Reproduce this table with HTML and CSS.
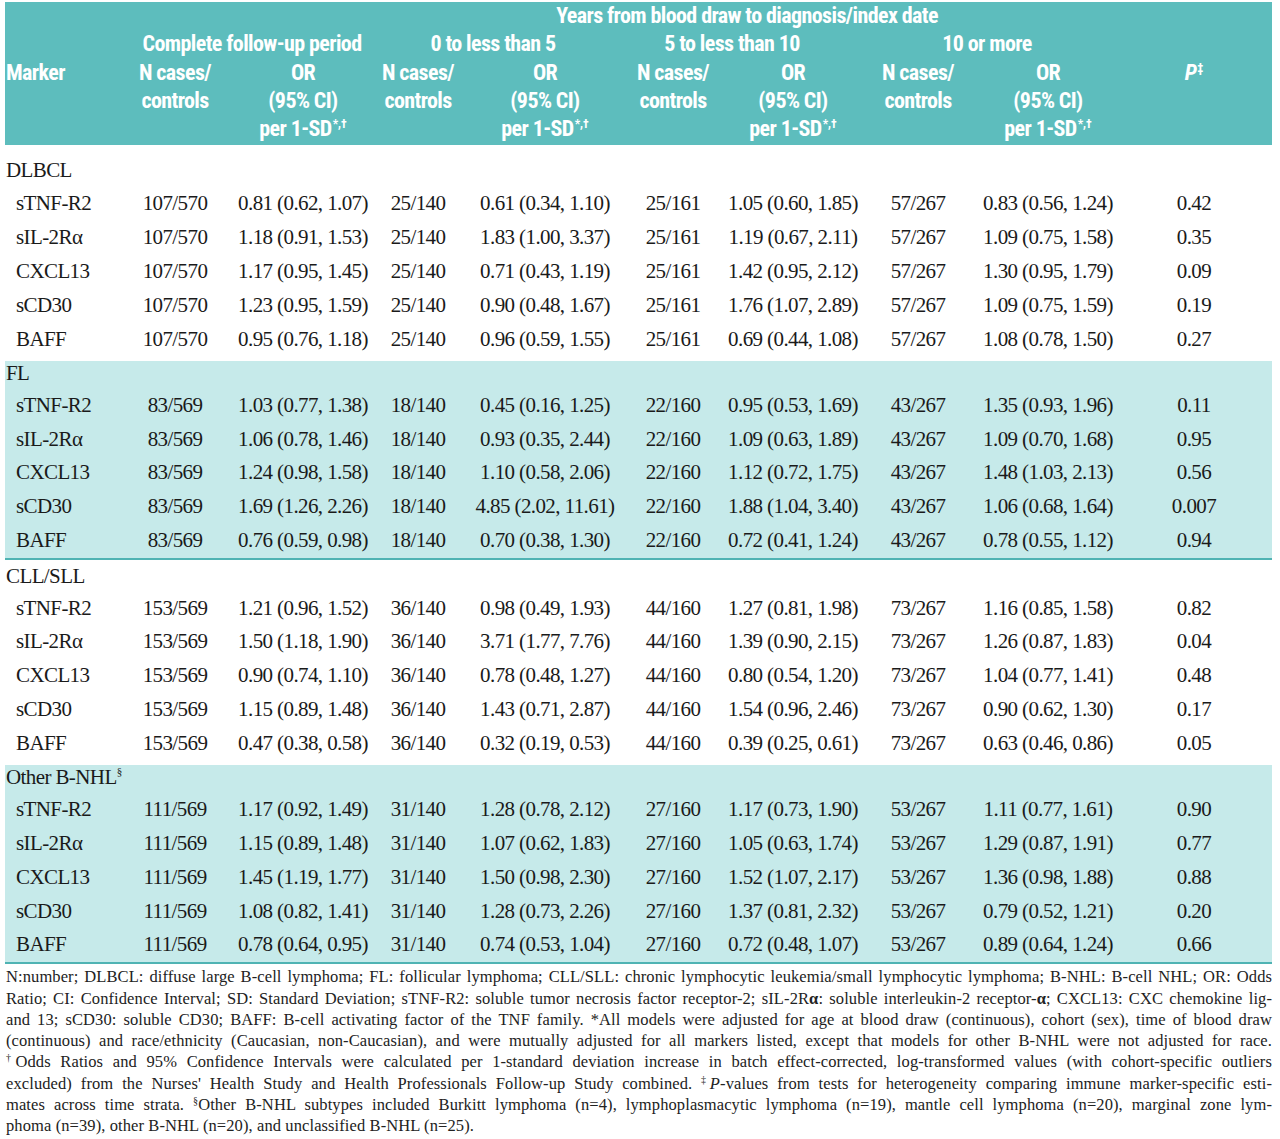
FILE: index.html
```html
<!DOCTYPE html>
<html lang="en">
<head>
<meta charset="utf-8">
<title>Immune markers and B-NHL risk by time from blood draw</title>
<link rel="stylesheet" href="styles.css">
</head>
<body>
<div class="page">
<table class="tbl">
  <colgroup>
    <col class="c-marker"><col class="c-n1"><col class="c-or1"><col class="c-n2"><col class="c-or2"><col class="c-n3"><col class="c-or3"><col class="c-n4"><col class="c-or4"><col class="c-p">
  </colgroup>
  <thead>
    <tr>
      <th colspan="3"></th>
      <th colspan="6" class="g-years">Years from blood draw to diagnosis/index date</th>
      <th></th>
    </tr>
    <tr>
      <th></th>
      <th colspan="2" class="g-all">Complete follow-up period</th>
      <th colspan="2" class="g-0">0 to less than 5</th>
      <th colspan="2" class="g-5">5 to less than 10</th>
      <th colspan="2" class="g-10">10 or more</th>
      <th></th>
    </tr>
    <tr>
      <th class="h-marker">Marker</th>
      <th>N cases/</th><th>OR</th>
      <th>N cases/</th><th>OR</th>
      <th>N cases/</th><th>OR</th>
      <th>N cases/</th><th>OR</th>
      <th class="h-p"><i>P</i><sup>‡</sup></th>
    </tr>
    <tr>
      <th></th>
      <th>controls</th><th>(95% CI)</th>
      <th>controls</th><th>(95% CI)</th>
      <th>controls</th><th>(95% CI)</th>
      <th>controls</th><th>(95% CI)</th>
      <th></th>
    </tr>
    <tr class="h-last">
      <th></th>
      <th></th><th>per 1-SD<sup>*,†</sup></th>
      <th></th><th>per 1-SD<sup>*,†</sup></th>
      <th></th><th>per 1-SD<sup>*,†</sup></th>
      <th></th><th>per 1-SD<sup>*,†</sup></th>
      <th></th>
    </tr>
  </thead>

  <tbody class="sec sec-first">
    <tr class="lab"><td colspan="10">DLBCL</td></tr>
    <tr><td class="mk">sTNF-R2</td><td>107/570</td><td>0.81 (0.62, 1.07)</td><td>25/140</td><td>0.61 (0.34, 1.10)</td><td>25/161</td><td>1.05 (0.60, 1.85)</td><td>57/267</td><td>0.83 (0.56, 1.24)</td><td class="p">0.42</td></tr>
    <tr><td class="mk">sIL-2Rα</td><td>107/570</td><td>1.18 (0.91, 1.53)</td><td>25/140</td><td>1.83 (1.00, 3.37)</td><td>25/161</td><td>1.19 (0.67, 2.11)</td><td>57/267</td><td>1.09 (0.75, 1.58)</td><td class="p">0.35</td></tr>
    <tr><td class="mk">CXCL13</td><td>107/570</td><td>1.17 (0.95, 1.45)</td><td>25/140</td><td>0.71 (0.43, 1.19)</td><td>25/161</td><td>1.42 (0.95, 2.12)</td><td>57/267</td><td>1.30 (0.95, 1.79)</td><td class="p">0.09</td></tr>
    <tr><td class="mk">sCD30</td><td>107/570</td><td>1.23 (0.95, 1.59)</td><td>25/140</td><td>0.90 (0.48, 1.67)</td><td>25/161</td><td>1.76 (1.07, 2.89)</td><td>57/267</td><td>1.09 (0.75, 1.59)</td><td class="p">0.19</td></tr>
    <tr class="end"><td class="mk">BAFF</td><td>107/570</td><td>0.95 (0.76, 1.18)</td><td>25/140</td><td>0.96 (0.59, 1.55)</td><td>25/161</td><td>0.69 (0.44, 1.08)</td><td>57/267</td><td>1.08 (0.78, 1.50)</td><td class="p">0.27</td></tr>
  </tbody>

  <tbody class="sec shade">
    <tr class="lab"><td colspan="10">FL</td></tr>
    <tr><td class="mk">sTNF-R2</td><td>83/569</td><td>1.03 (0.77, 1.38)</td><td>18/140</td><td>0.45 (0.16, 1.25)</td><td>22/160</td><td>0.95 (0.53, 1.69)</td><td>43/267</td><td>1.35 (0.93, 1.96)</td><td class="p">0.11</td></tr>
    <tr><td class="mk">sIL-2Rα</td><td>83/569</td><td>1.06 (0.78, 1.46)</td><td>18/140</td><td>0.93 (0.35, 2.44)</td><td>22/160</td><td>1.09 (0.63, 1.89)</td><td>43/267</td><td>1.09 (0.70, 1.68)</td><td class="p">0.95</td></tr>
    <tr><td class="mk">CXCL13</td><td>83/569</td><td>1.24 (0.98, 1.58)</td><td>18/140</td><td>1.10 (0.58, 2.06)</td><td>22/160</td><td>1.12 (0.72, 1.75)</td><td>43/267</td><td>1.48 (1.03, 2.13)</td><td class="p">0.56</td></tr>
    <tr><td class="mk">sCD30</td><td>83/569</td><td>1.69 (1.26, 2.26)</td><td>18/140</td><td>4.85 (2.02, 11.61)</td><td>22/160</td><td>1.88 (1.04, 3.40)</td><td>43/267</td><td>1.06 (0.68, 1.64)</td><td class="p">0.007</td></tr>
    <tr><td class="mk">BAFF</td><td>83/569</td><td>0.76 (0.59, 0.98)</td><td>18/140</td><td>0.70 (0.38, 1.30)</td><td>22/160</td><td>0.72 (0.41, 1.24)</td><td>43/267</td><td>0.78 (0.55, 1.12)</td><td class="p">0.94</td></tr>
  </tbody>

  <tbody class="sec plain">
    <tr class="lab"><td colspan="10">CLL/SLL</td></tr>
    <tr><td class="mk">sTNF-R2</td><td>153/569</td><td>1.21 (0.96, 1.52)</td><td>36/140</td><td>0.98 (0.49, 1.93)</td><td>44/160</td><td>1.27 (0.81, 1.98)</td><td>73/267</td><td>1.16 (0.85, 1.58)</td><td class="p">0.82</td></tr>
    <tr><td class="mk">sIL-2Rα</td><td>153/569</td><td>1.50 (1.18, 1.90)</td><td>36/140</td><td>3.71 (1.77, 7.76)</td><td>44/160</td><td>1.39 (0.90, 2.15)</td><td>73/267</td><td>1.26 (0.87, 1.83)</td><td class="p">0.04</td></tr>
    <tr><td class="mk">CXCL13</td><td>153/569</td><td>0.90 (0.74, 1.10)</td><td>36/140</td><td>0.78 (0.48, 1.27)</td><td>44/160</td><td>0.80 (0.54, 1.20)</td><td>73/267</td><td>1.04 (0.77, 1.41)</td><td class="p">0.48</td></tr>
    <tr><td class="mk">sCD30</td><td>153/569</td><td>1.15 (0.89, 1.48)</td><td>36/140</td><td>1.43 (0.71, 2.87)</td><td>44/160</td><td>1.54 (0.96, 2.46)</td><td>73/267</td><td>0.90 (0.62, 1.30)</td><td class="p">0.17</td></tr>
    <tr class="end"><td class="mk">BAFF</td><td>153/569</td><td>0.47 (0.38, 0.58)</td><td>36/140</td><td>0.32 (0.19, 0.53)</td><td>44/160</td><td>0.39 (0.25, 0.61)</td><td>73/267</td><td>0.63 (0.46, 0.86)</td><td class="p">0.05</td></tr>
  </tbody>

  <tbody class="sec shade">
    <tr class="lab"><td colspan="10">Other B-NHL<sup>§</sup></td></tr>
    <tr><td class="mk">sTNF-R2</td><td>111/569</td><td>1.17 (0.92, 1.49)</td><td>31/140</td><td>1.28 (0.78, 2.12)</td><td>27/160</td><td>1.17 (0.73, 1.90)</td><td>53/267</td><td>1.11 (0.77, 1.61)</td><td class="p">0.90</td></tr>
    <tr><td class="mk">sIL-2Rα</td><td>111/569</td><td>1.15 (0.89, 1.48)</td><td>31/140</td><td>1.07 (0.62, 1.83)</td><td>27/160</td><td>1.05 (0.63, 1.74)</td><td>53/267</td><td>1.29 (0.87, 1.91)</td><td class="p">0.77</td></tr>
    <tr><td class="mk">CXCL13</td><td>111/569</td><td>1.45 (1.19, 1.77)</td><td>31/140</td><td>1.50 (0.98, 2.30)</td><td>27/160</td><td>1.52 (1.07, 2.17)</td><td>53/267</td><td>1.36 (0.98, 1.88)</td><td class="p">0.88</td></tr>
    <tr><td class="mk">sCD30</td><td>111/569</td><td>1.08 (0.82, 1.41)</td><td>31/140</td><td>1.28 (0.73, 2.26)</td><td>27/160</td><td>1.37 (0.81, 2.32)</td><td>53/267</td><td>0.79 (0.52, 1.21)</td><td class="p">0.20</td></tr>
    <tr><td class="mk">BAFF</td><td>111/569</td><td>0.78 (0.64, 0.95)</td><td>31/140</td><td>0.74 (0.53, 1.04)</td><td>27/160</td><td>0.72 (0.48, 1.07)</td><td>53/267</td><td>0.89 (0.64, 1.24)</td><td class="p">0.66</td></tr>
  </tbody>
</table>

<div class="notes">
  <p class="ln">N:number; DLBCL: diffuse large B-cell lymphoma; FL: follicular lymphoma; CLL/SLL: chronic lymphocytic leukemia/small lymphocytic lymphoma; B-NHL: B-cell NHL; OR: Odds</p>
  <p class="ln">Ratio; CI: Confidence Interval; SD: Standard Deviation; sTNF-R2: soluble tumor necrosis factor receptor-2; sIL-2R<b>α</b>: soluble interleukin-2 receptor-<b>α</b>; CXCL13: CXC chemokine lig-</p>
  <p class="ln">and 13; sCD30: soluble CD30; BAFF: B-cell activating factor of the TNF family. *All models were adjusted for age at blood draw (continuous), cohort (sex), time of blood draw</p>
  <p class="ln">(continuous) and race/ethnicity (Caucasian, non-Caucasian), and were mutually adjusted for all markers listed, except that models for other B-NHL were not adjusted for race.</p>
  <p class="ln"><sup class="mark">†</sup>Odds Ratios and 95% Confidence Intervals were calculated per 1-standard deviation increase in batch effect-corrected, log-transformed values (with cohort-specific outliers</p>
  <p class="ln">excluded) from the Nurses' Health Study and Health Professionals Follow-up Study combined. <sup class="mark">‡</sup><i>P</i>-values from tests for heterogeneity comparing immune marker-specific esti-</p>
  <p class="ln">mates across time strata. <sup>§</sup>Other B-NHL subtypes included Burkitt lymphoma (n=4), lymphoplasmacytic lymphoma (n=19), mantle cell lymphoma (n=20), marginal zone lym-</p>
  <p class="ln last">phoma (n=39), other B-NHL (n=20), and unclassified B-NHL (n=25).</p>
</div>
</div>
</body>
</html>
```
FILE: styles.css
```css
html, body {
  margin: 0;
  padding: 0;
  background: #ffffff;
}

.page {
  margin: 2px 8px 0 5px;
  width: 1267px;
  color: #1a1a1a;
  font-family: "Liberation Serif", "Times New Roman", serif;
}

.tbl {
  width: 1267px;
  border-collapse: collapse;
  table-layout: fixed;
  font-size: 21px;
  letter-spacing: -0.6px;
}

.c-marker { width: 115px; }
.c-n1 { width: 110px; }
.c-or1 { width: 146px; }
.c-n2 { width: 84px; }
.c-or2 { width: 170px; }
.c-n3 { width: 86px; }
.c-or3 { width: 154px; }
.c-n4 { width: 96px; }
.c-or4 { width: 164px; }
.c-p { width: 142px; }

/* header */
.tbl thead {
  background: #5dbdbd;
  color: #ffffff;
}

.tbl th {
  padding: 0;
  font-family: Roboto, "Liberation Sans", sans-serif;
  font-stretch: 75%;
  font-weight: bold;
  font-size: 22px;
  letter-spacing: -0.6px;
  line-height: 28.3px;
  text-align: center;
  white-space: nowrap;
  vertical-align: middle;
}

.tbl th sup {
  font-size: 12px;
  line-height: 0;
  vertical-align: 8px;
  margin-left: 1px;
  letter-spacing: 0;
}

.tbl .h-last th {
  padding-bottom: 1.5px;
}

.tbl th.h-marker {
  text-align: left;
  padding-left: 1px;
}

.tbl th.h-p {
  padding-right: 14px;
}

.tbl th.g-all { padding-left: 8px; }
.tbl th.g-0 { padding-right: 20px; }
.tbl th.g-5 { padding-right: 36px; }
.tbl th.g-10 { padding-right: 26px; }
.tbl th.g-years { padding-right: 12px; }

/* body */
.tbl td {
  padding: 0;
  line-height: 33.75px;
  text-align: center;
  white-space: nowrap;
  vertical-align: middle;
}

.tbl td.mk {
  text-align: left;
  padding-left: 11px;
}

.tbl td.p {
  padding-right: 14px;
}

.tbl .lab td {
  text-align: left;
  padding: 0 0 4px 1px;
  line-height: 24px;
}

.tbl .lab sup {
  font-size: 11px;
  line-height: 0;
  vertical-align: 9px;
}

.tbl .sec-first td {
  line-height: 34px;
}

.tbl .sec-first .lab td {
  padding-top: 13px;
  padding-bottom: 4px;
  line-height: 24px;
}

.tbl .plain .lab td {
  padding-top: 4px;
}

.tbl .end td {
  padding-bottom: 5px;
}

.tbl .shade {
  background: #c6eaea;
  border-bottom: 2px solid #4fb3b3;
}

/* notes */
.notes {
  margin-top: 2px;
  font-size: 16.5px;
  letter-spacing: 0.1px;
  line-height: 21.3px;
  color: #222222;
}

.notes .ln {
  margin: 0;
  padding-left: 1px;
  white-space: nowrap;
  text-align: justify;
  text-align-last: justify;
}

.notes .ln.last {
  text-align-last: left;
}

.notes sup {
  font-size: 10px;
  line-height: 0;
  vertical-align: 6px;
}

.notes sup.mark {
  margin-right: -1px;
}
```
